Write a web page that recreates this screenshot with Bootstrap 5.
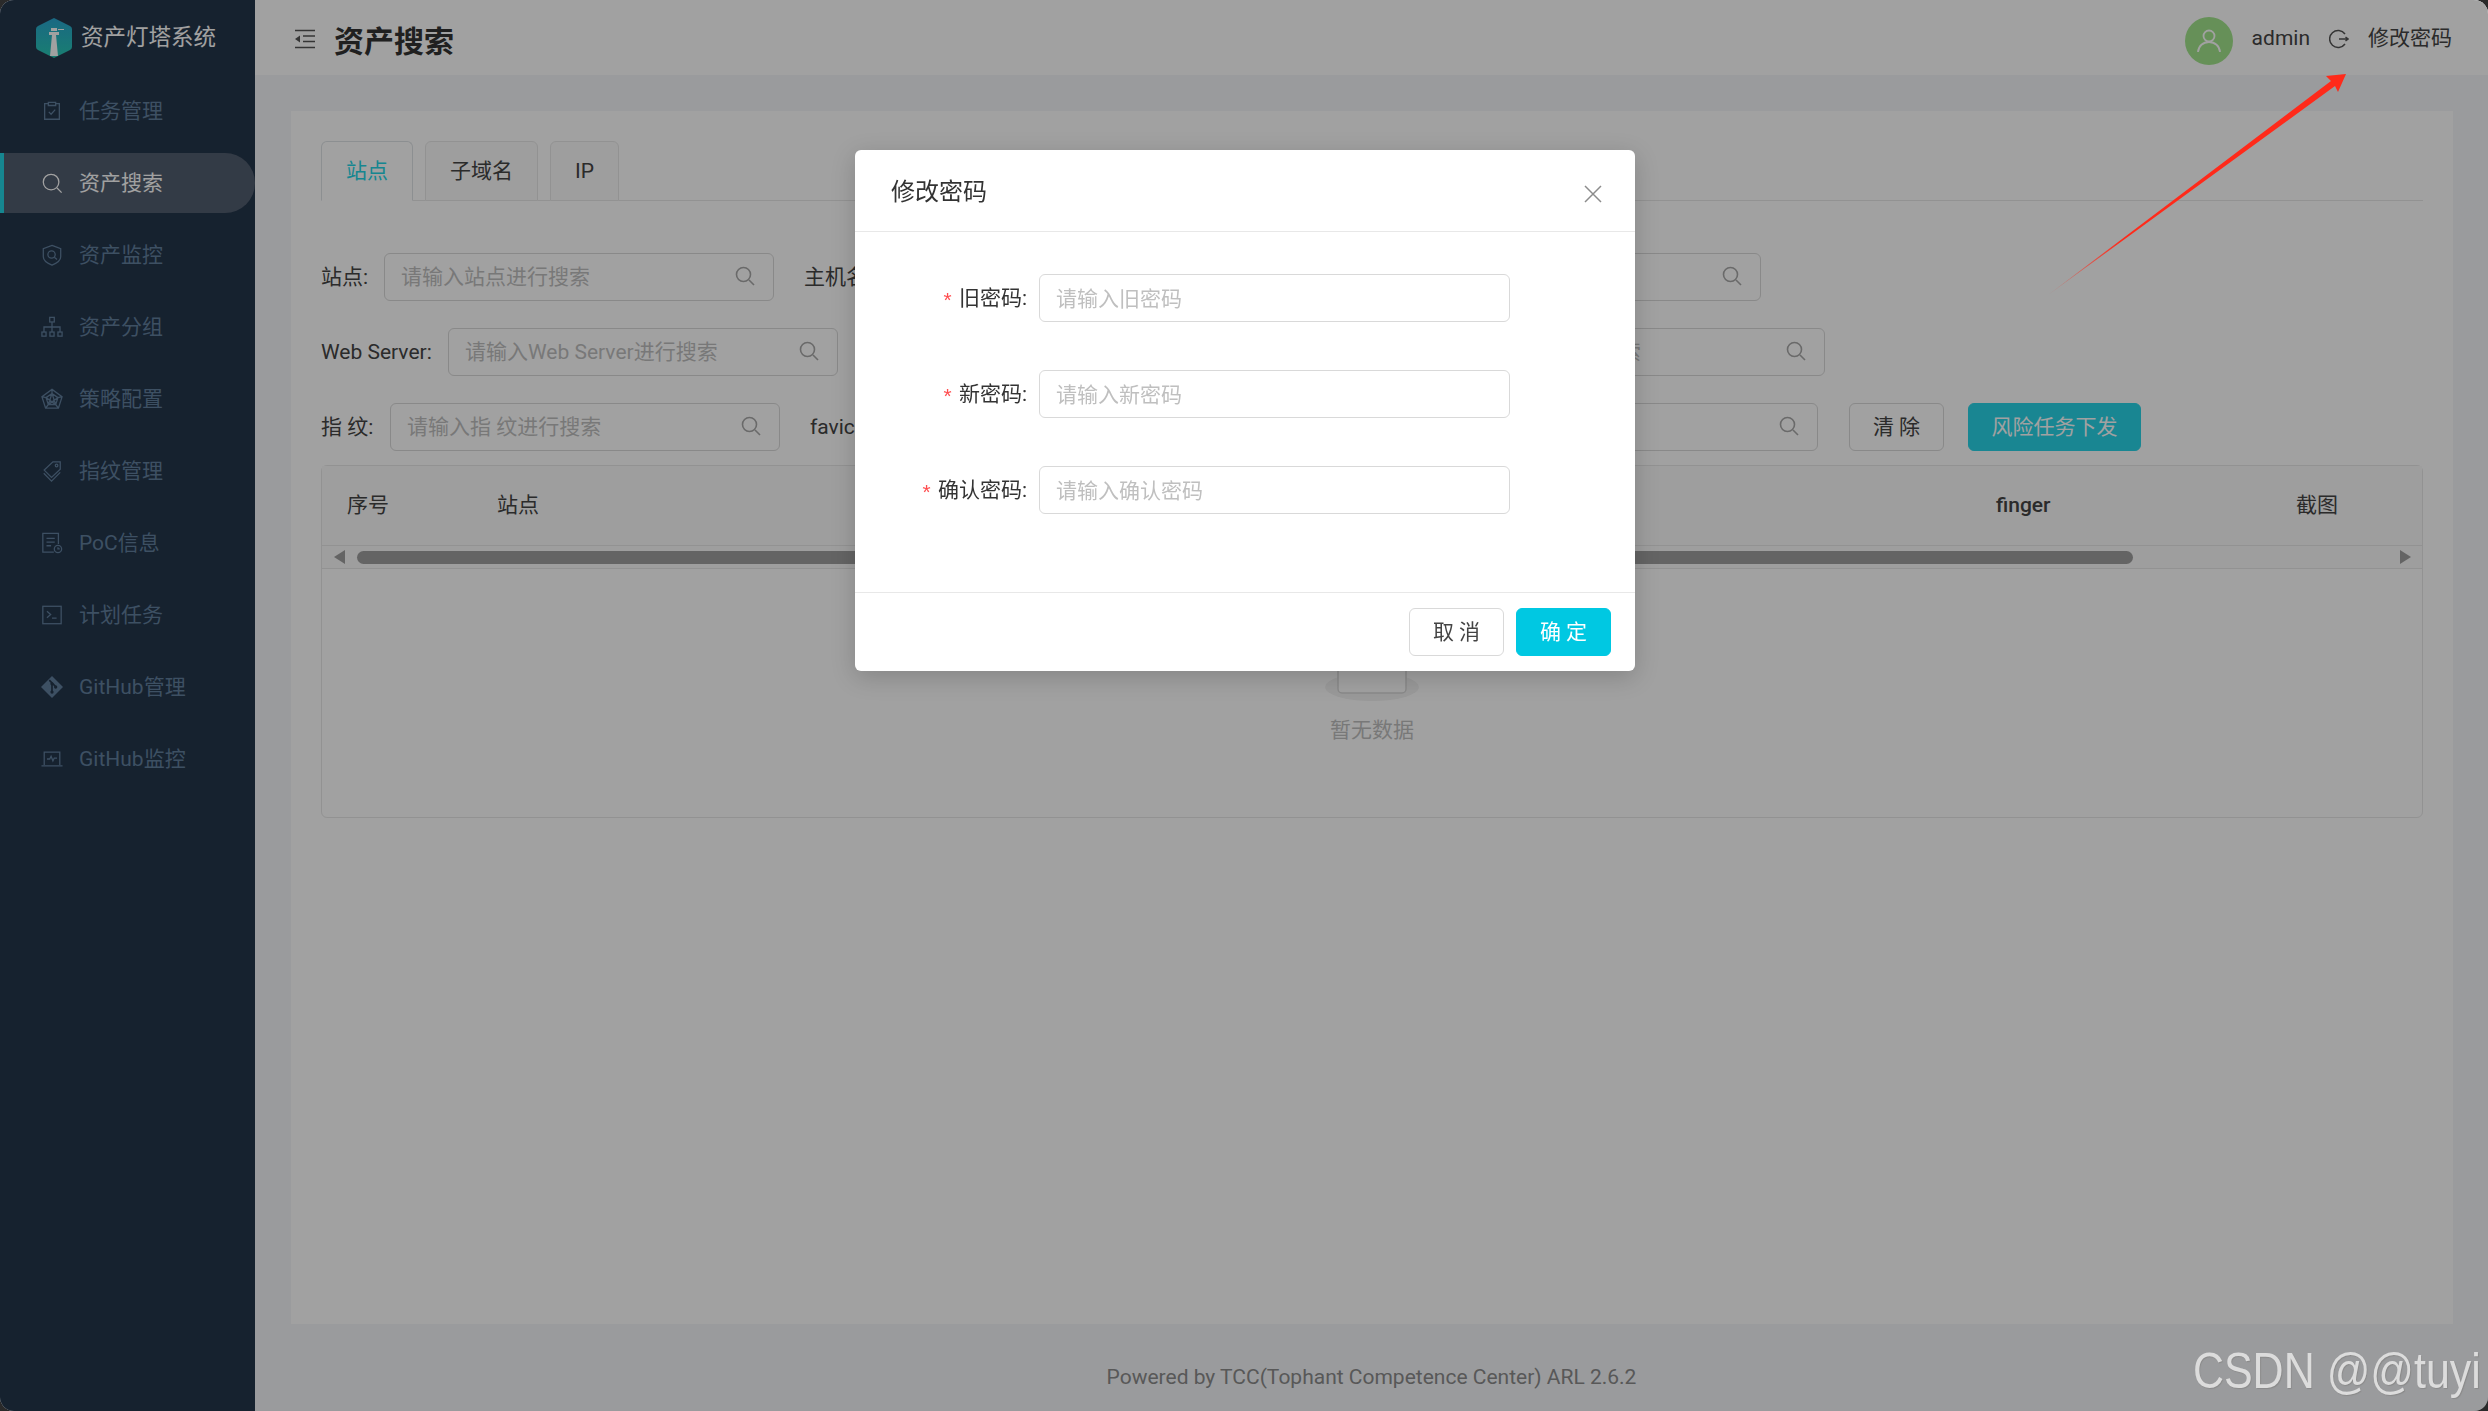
<!DOCTYPE html>
<html lang="zh-CN">
<head>
    <meta charset="UTF-8">
    <meta name="viewport" content="width=device-width, initial-scale=1.0">
    <title>资产灯塔系统</title>
    <link href="https://cdn.jsdelivr.net/npm/bootstrap@5.3.0/dist/css/bootstrap.min.css" rel="stylesheet">
    <style>
        html, body { height: 100%; }
        body {
            background-color: #2a2a2a;
            font-family: Roboto, "Noto Sans CJK SC", sans-serif;
            font-size: 21px;
            color: #444;
            overflow: hidden;
        }
        .app-window { width: 2488px; height: 1411px; border-radius: 14px; overflow: hidden; background: #f4f6f9; }
        .side-panel { width: 255px; background: #24364b; flex-shrink: 0; }
        .side-logo { height: 75px; padding-left: 36px; gap: 9px; color: #fff; font-size: 22.5px; }
        .side-menu { padding-top: 6px; gap: 12px; }
        .side-link { height: 60px; padding-left: 41px; gap: 16px; color: #617f9d; border-radius: 0 30px 30px 0; text-decoration: none; }
        .side-link span { padding-top: 2px; }
        .side-link svg { width: 22px; height: 22px; fill: none; stroke: currentColor; stroke-width: 1.4; flex-shrink: 0; }
        .side-link.is-on { background: #525e6f; color: #fff; padding-left: 37px; border-left: 4px solid #24d5e5; }
        .top-bar { height: 75px; background: #fff; padding: 0 36px 0 40px; }
        .top-fold { margin-top: 2px; }
        .top-title { font-size: 30px; font-weight: 700; color: #333; margin: 7px 0 0 19px; }
        .top-right { gap: 19px; padding-top: 2px; }
        .top-user { width: 48px; height: 48px; border-radius: 50%; background: #a2e58c; margin-top: 5px; }
        .page-body { padding: 36px 35px 0 36px; }
        .page-card { height: 1213px; background: #fff; padding: 30px 30px 0 30px; }
        .tab-line { gap: 12px; border-bottom: 1px solid #e8e8e8; height: 60px; }
        .tab-line .nav-link { height: 60px; padding: 0 24px; line-height: 58px; font-size: 21px; color: #444; background: #fafafa; border: 1px solid #e8e8e8; border-radius: 6px 6px 0 0; margin-bottom: 0; }
        .tab-line .nav-link.active { color: #24d5e5; background: #fff; border-bottom-color: #fff; }
        .filter-block { margin-top: 52px; gap: 27px; }
        .filter-row { gap: 30px; height: 48px; }
        .filter-label { white-space: nowrap; padding-top: 2px; }
        .w-s { width: 63px; }
        .w-m { width: 84px; }
        .w-web { width: 127px; }
        .w-fp { width: 69px; }
        .w-fav { width: 138px; }
        .w-port { width: 60px; }
        .search-box { width: 390px; height: 48px; border: 1px solid #d9d9d9; border-radius: 6px; padding: 0 18px 0 16px; }
        .search-box input { border: 0; outline: 0; background: transparent; min-width: 0; flex: 1; font-size: 21px; padding: 2px 0 0; }
        .search-box input::placeholder, .dlg-input::placeholder { color: #bfbfbf; }
        .search-box svg { width: 20px; height: 20px; fill: none; stroke: #a8a8a8; stroke-width: 1.6; flex-shrink: 0; margin-top: -2px; }
        .btn-plain, .btn-main { height: 48px; font-size: 21px; border-radius: 6px; padding: 0; line-height: 1; }
        .btn-plain { background: #fff; border: 1px solid #d9d9d9; color: #444; width: 95px; }
        .btn-main { background: #00c8e2; border: 1px solid #00c8e2; color: #fff; width: 95px; }
        .btn-risk { background: #28d5e8; border-color: #28d5e8; margin-left: 24px; width: 173px; }
        .btn-clear { margin-left: 1px; }
        .data-box { margin-top: 14px; height: 353px; border: 1px solid #e8e8e8; border-radius: 6px; }
        .data-head { table-layout: fixed; width: 100%; }
        .data-head th { height: 79px; padding: 0; font-weight: 400; font-size: 21px; color: #444; background: #fafafa; border: 0; vertical-align: middle; }
        .col-no { width: 175px; padding-left: 25px !important; }
        .col-finger { width: 300px; font-weight: 500 !important; }
        .col-shot { width: 126px; }
        .scroll-row { height: 24px; border-top: 1px solid #e8e8e8; border-bottom: 1px solid #e8e8e8; background: #fafafa; padding: 0 11px 0 12px; }
        .scroll-left { width: 0; height: 0; border: 7px solid transparent; border-left-width: 0; border-right: 11px solid #9f9f9f; }
        .scroll-right { width: 0; height: 0; border: 7px solid transparent; border-right-width: 0; border-left: 11px solid #9f9f9f; margin-left: auto; }
        .scroll-thumb { width: 1776px; height: 13px; border-radius: 7px; background: #9f9f9f; margin-left: 12px; }
        .empty-zone { padding-top: 68px; color: #bfbfbf; gap: 14px; line-height: 30px; }
        .page-foot { height: 87px; color: #8c8c8c; padding-top: 20px; }
        .modal-backdrop { position: absolute; --bs-backdrop-opacity: .37; }
        .dlg-wrap { --bs-modal-width: 780px; margin: 150px auto 0 855px; width: 780px; max-width: 780px; }
        .dlg-box { border: 0; border-radius: 6px; box-shadow: 0 6px 24px rgba(0,0,0,.18); }
        .dlg-head { height: 82px; padding: 3px 33px 0 36px; border-bottom: 1px solid #e8e8e8; }
        .dlg-head .modal-title { font-size: 24px; font-weight: 400; color: #333; }
        .dlg-close { background: none; border: 0; padding: 3px 0 0; line-height: 0; }
        .dlg-body { padding: 42px 0 30px; }
        .dlg-row { height: 48px; margin-bottom: 48px; }
        .dlg-label { width: 172px; text-align: right; margin: 2px 12px 0 0; color: #333; white-space: nowrap; }
        .dlg-label::before { content: "*"; display: inline-block; font-family: "Liberation Mono", monospace; color: #ff4d4f; margin-right: 5px; transform: translateY(3px); }
        .dlg-input { width: 471px; height: 48px; font-size: 21px; border: 1px solid #d9d9d9; border-radius: 6px; padding: 2px 16px 0; }
        .dlg-foot { padding: 15px 24px 15px; gap: 12px; border-top: 1px solid #e8e8e8; }
        .dlg-foot .btn-plain, .dlg-foot .btn-main { margin: 0; }
        .mark-arrow { position: absolute; left: 0; top: 0; width: 2488px; height: 1411px; z-index: 1060; pointer-events: none; }
        .csdn-mark { position: absolute; right: 7px; bottom: 15px; z-index: 1060; font-family: "Liberation Sans", sans-serif; font-size: 50px; line-height: 50px; color: #dcdcdc; text-shadow: 1px 1px 1px #8a8a8a; transform: scaleX(.86); transform-origin: right center; white-space: nowrap; }
    </style>
</head>
<body>
<div class="app-window position-relative d-flex">
    <aside class="side-panel d-flex flex-column">
        <div class="side-logo d-flex align-items-center">
            <svg width="36" height="40" viewBox="0 0 36 40">
                <defs>
                    <linearGradient id="logoFill" x1="0" y1="0" x2="0" y2="1">
                        <stop offset="0" stop-color="#2aa6d0"/>
                        <stop offset="1" stop-color="#29c9b4"/>
                    </linearGradient>
                </defs>
                <path d="M18 0 34 8Q36 9 36 11V29Q36 31 34 32L18 40 2 32Q0 31 0 29V11Q0 9 2 8Z" fill="url(#logoFill)"/>
                <path d="M14 38 16 17H20L22 38Z" fill="#fff"/>
                <path d="M13 14H23V17H13ZM15 10H21V13H15ZM22 11H28V12H22Z" fill="#fff"/>
            </svg>
            <span>资产灯塔系统</span>
        </div>
        <nav class="side-menu nav flex-column">
            <a class="side-link d-flex align-items-center" href="#">
                <svg viewBox="0 0 24 24"><path d="M8 4H4v17h16V4h-4M8 2.500h8v3.500H8zM8.500 13l2.500 2.500 4.500-5"/></svg>
                <span>任务管理</span>
            </a>
            <a class="side-link is-on d-flex align-items-center" href="#">
                <svg viewBox="0 0 24 24"><circle cx="11" cy="11" r="8.500"/><path d="m17.500 17.500 5 5"/></svg>
                <span>资产搜索</span>
            </a>
            <a class="side-link d-flex align-items-center" href="#">
                <svg viewBox="0 0 24 24"><path d="M12 1.500 21.500 5v9c0 4-4 7-9.500 9C6.500 21 2.500 18 2.500 14V5z"/><circle cx="11.500" cy="11.500" r="4"/><path d="m14.500 14.500 3 2.500"/></svg>
                <span>资产监控</span>
            </a>
            <a class="side-link d-flex align-items-center" href="#">
                <svg viewBox="0 0 24 24"><rect x="9.500" y="1.500" width="5" height="5"/><rect x="1" y="17.500" width="4.500" height="4.500"/><rect x="9.750" y="17.500" width="4.500" height="4.500"/><rect x="18.500" y="17.500" width="4.500" height="4.500"/><path d="M12 6.500v11M3.250 17.500V12h17.500v5.500"/></svg>
                <span>资产分组</span>
            </a>
            <a class="side-link d-flex align-items-center" href="#">
                <svg viewBox="0 0 24 24"><path d="M12 1.500 23 9.500 19 22H5L1 9.500zM12 6l6.500 4.500-2.500 7.500H8l-2.500-7.500zM12 1.500V6M23 9.500l-4.500 1M19 22l-3-4M5 22l3-4M1 9.500l4.500 1M12 6l4 12M12 6 8 18M5.500 10.500 16 18M18.500 10.500 8 18"/></svg>
                <span>策略配置</span>
            </a>
            <a class="side-link d-flex align-items-center" href="#">
                <svg viewBox="0 0 24 24"><path d="M13 2h8v8L11.500 19 3.500 11zM3 14.500l8.500 8.500 9.500-9.500"/><circle cx="17" cy="6" r="1.400"/></svg>
                <span>指纹管理</span>
            </a>
            <a class="side-link d-flex align-items-center" href="#">
                <svg viewBox="0 0 24 24"><path d="M14 22H2V1.500h17V13M6 7h9M6 11h9M6 15h5"/><circle cx="18.500" cy="18.500" r="4"/><path d="M18.500 16.500v2h2"/></svg>
                <span>PoC信息</span>
            </a>
            <a class="side-link d-flex align-items-center" href="#">
                <svg viewBox="0 0 24 24"><rect x="2" y="2.500" width="20" height="19"/><path d="m6.500 8 4 3.500-4 3.500M12 15.500h5"/></svg>
                <span>计划任务</span>
            </a>
            <a class="side-link d-flex align-items-center" href="#">
                <svg viewBox="0 0 24 24"><path d="M12 0 24 12 12 24 0 12z" fill="currentColor" stroke="none"/><path d="M9 4.500 15.500 11M12 8.500v9" stroke="#24364b" stroke-width="1.800"/><circle cx="12" cy="8.500" r="1.800" fill="#24364b" stroke="none"/><circle cx="12" cy="17.500" r="1.800" fill="#24364b" stroke="none"/><circle cx="16" cy="12" r="1.800" fill="#24364b" stroke="none"/></svg>
                <span>GitHub管理</span>
            </a>
            <a class="side-link d-flex align-items-center" href="#">
                <svg viewBox="0 0 24 24"><path d="M3.500 18.500V4.500h17v14M0.500 19.500h23M6.500 12h3l1.500-3 2 5 1.500-3h3"/></svg>
                <span>GitHub监控</span>
            </a>
        </nav>
    </aside>

    <div class="flex-grow-1 d-flex flex-column">
        <header class="top-bar d-flex align-items-center">
            <svg class="top-fold" width="20" height="20" viewBox="0 0 20 20" fill="none" stroke="#555" stroke-width="1.500"><path d="M0 1.500h20M8 7h12M8 12.500h12M0 18.500h20"/><path d="M0 10l5-3.500v7z" fill="#555" stroke="none"/></svg>
            <span class="top-title">资产搜索</span>
            <div class="top-right ms-auto d-flex align-items-center">
                <span class="top-user d-flex align-items-center justify-content-center">
                    <svg width="26" height="26" viewBox="0 0 26 26" fill="none" stroke="#fff" stroke-width="1.800"><circle cx="13" cy="8" r="5.500"/><path d="M2 24c.5-6 5-10 11-10s10.500 4 11 10"/></svg>
                </span>
                <span>admin</span>
                <svg width="20" height="20" viewBox="0 0 20 20" fill="none" stroke="#555" stroke-width="1.500"><path d="M16 5A8.500 8.500 0 1 0 16 15M10 10h9M16.500 8l2.500 2-2.500 2"/></svg>
                <span>修改密码</span>
            </div>
        </header>

        <main class="page-body flex-grow-1">
            <section class="page-card">
                <ul class="nav nav-tabs tab-line">
                    <li class="nav-item"><a class="nav-link active" href="#">站点</a></li>
                    <li class="nav-item"><a class="nav-link" href="#">子域名</a></li>
                    <li class="nav-item"><a class="nav-link" href="#">IP</a></li>
                </ul>

                <div class="filter-block d-flex flex-column">
                    <div class="filter-row d-flex align-items-center">
                        <div class="d-flex align-items-center"><label class="filter-label w-s">站点:</label><div class="search-box d-flex align-items-center"><input type="text" placeholder="请输入站点进行搜索"><svg viewBox="0 0 20 20"><circle cx="8.500" cy="8.500" r="7"/><path d="m14 14 5 5"/></svg></div></div>
                        <div class="d-flex align-items-center"><label class="filter-label w-m">主机名:</label><div class="search-box d-flex align-items-center"><input type="text" placeholder="请输入主机名进行搜索"><svg viewBox="0 0 20 20"><circle cx="8.500" cy="8.500" r="7"/><path d="m14 14 5 5"/></svg></div></div>
                        <div class="d-flex align-items-center"><label class="filter-label w-s">标题:</label><div class="search-box d-flex align-items-center"><input type="text"><svg viewBox="0 0 20 20"><circle cx="8.500" cy="8.500" r="7"/><path d="m14 14 5 5"/></svg></div></div>
                    </div>
                    <div class="filter-row d-flex align-items-center">
                        <div class="d-flex align-items-center"><label class="filter-label w-web">Web Server:</label><div class="search-box d-flex align-items-center"><input type="text" placeholder="请输入Web Server进行搜索"><svg viewBox="0 0 20 20"><circle cx="8.500" cy="8.500" r="7"/><path d="m14 14 5 5"/></svg></div></div>
                        <div class="d-flex align-items-center"><label class="filter-label w-m">状态码:</label><div class="search-box d-flex align-items-center"><input type="text"><svg viewBox="0 0 20 20"><circle cx="8.500" cy="8.500" r="7"/><path d="m14 14 5 5"/></svg></div></div>
                        <div class="d-flex align-items-center"><label class="filter-label w-s">标题:</label><div class="search-box d-flex align-items-center"><input type="text" placeholder="请输入标题进行搜索"><svg viewBox="0 0 20 20"><circle cx="8.500" cy="8.500" r="7"/><path d="m14 14 5 5"/></svg></div></div>
                    </div>
                    <div class="filter-row d-flex align-items-center">
                        <div class="d-flex align-items-center"><label class="filter-label w-fp">指 纹:</label><div class="search-box d-flex align-items-center"><input type="text" placeholder="请输入指 纹进行搜索"><svg viewBox="0 0 20 20"><circle cx="8.500" cy="8.500" r="7"/><path d="m14 14 5 5"/></svg></div></div>
                        <div class="d-flex align-items-center"><label class="filter-label w-fav">favicon hash:</label><div class="search-box d-flex align-items-center"><input type="text"><svg viewBox="0 0 20 20"><circle cx="8.500" cy="8.500" r="7"/><path d="m14 14 5 5"/></svg></div></div>
                        <div class="d-flex align-items-center"><label class="filter-label w-port">端口:</label><div class="search-box d-flex align-items-center"><input type="text" placeholder="请输入端口进行搜索"><svg viewBox="0 0 20 20"><circle cx="8.500" cy="8.500" r="7"/><path d="m14 14 5 5"/></svg></div></div>
                        <div class="d-flex">
                            <button type="button" class="btn btn-plain btn-clear">清 除</button>
                            <button type="button" class="btn btn-main btn-risk">风险任务下发</button>
                        </div>
                    </div>
                </div>

                <div class="data-box d-flex flex-column">
                    <table class="table data-head mb-0">
                        <thead>
                            <tr>
                                <th class="col-no">序号</th>
                                <th>站点</th>
                                <th class="col-finger">finger</th>
                                <th class="col-shot">截图</th>
                            </tr>
                        </thead>
                    </table>
                    <div class="scroll-row d-flex align-items-center">
                        <span class="scroll-left"></span>
                        <span class="scroll-thumb"></span>
                        <span class="scroll-right"></span>
                    </div>
                    <div class="empty-zone d-flex flex-column align-items-center">
                        <svg width="96" height="64" viewBox="0 0 96 64">
                            <ellipse cx="48" cy="50" rx="47" ry="14" fill="#f2f2f2"/>
                            <rect x="14" y="4" width="68" height="52" rx="4" fill="#fff" stroke="#d9d9d9" stroke-width="1.500"/>
                        </svg>
                        <span>暂无数据</span>
                    </div>
                </div>
            </section>
        </main>

        <footer class="page-foot d-flex align-items-center justify-content-center">Powered by TCC(Tophant Competence Center) ARL 2.6.2</footer>
    </div>

    <div class="modal-backdrop show"></div>

    <div class="modal d-block" tabindex="-1">
        <div class="modal-dialog dlg-wrap">
            <div class="modal-content dlg-box">
                <div class="modal-header dlg-head">
                    <h5 class="modal-title">修改密码</h5>
                    <button type="button" class="dlg-close ms-auto" aria-label="Close">
                        <svg width="18" height="18" viewBox="0 0 18 18" fill="none" stroke="#8c8c8c" stroke-width="1.500"><path d="M1 1l16 16M17 1 1 17"/></svg>
                    </button>
                </div>
                <div class="modal-body dlg-body">
                    <div class="dlg-row d-flex align-items-center">
                        <label class="dlg-label">旧密码:</label>
                        <input type="password" class="form-control dlg-input" placeholder="请输入旧密码">
                    </div>
                    <div class="dlg-row d-flex align-items-center">
                        <label class="dlg-label">新密码:</label>
                        <input type="password" class="form-control dlg-input" placeholder="请输入新密码">
                    </div>
                    <div class="dlg-row d-flex align-items-center">
                        <label class="dlg-label">确认密码:</label>
                        <input type="password" class="form-control dlg-input" placeholder="请输入确认密码">
                    </div>
                </div>
                <div class="modal-footer dlg-foot">
                    <button type="button" class="btn btn-plain">取 消</button>
                    <button type="button" class="btn btn-main">确 定</button>
                </div>
            </div>
        </div>
    </div>

    <svg class="mark-arrow" viewBox="0 0 2488 1411">
        <defs>
            <linearGradient id="arrowFill" gradientUnits="userSpaceOnUse" x1="2048" y1="295" x2="2346" y2="74">
                <stop offset="0" stop-color="#ff2a1a" stop-opacity=".2"/>
                <stop offset=".25" stop-color="#ff2a1a"/>
                <stop offset="1" stop-color="#ff2a1a"/>
            </linearGradient>
        </defs>
        <polygon points="2048,295 2331,81 2326,76 2346,74 2338,92 2335,86" fill="url(#arrowFill)"/>
    </svg>
    <div class="csdn-mark">CSDN @@tuyi</div>
</div>
<script src="https://cdn.jsdelivr.net/npm/bootstrap@5.3.0/dist/js/bootstrap.bundle.min.js"></script>
</body>
</html>
